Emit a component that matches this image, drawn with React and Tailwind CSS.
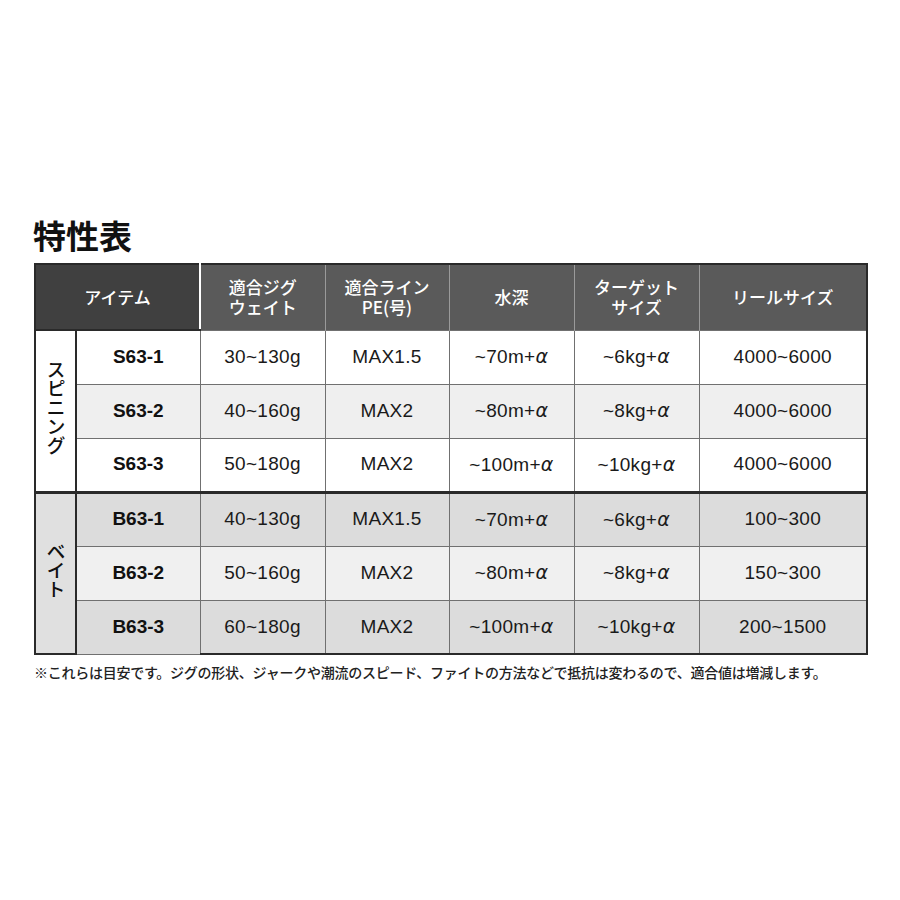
import React from "react";

const jp = { fontFamily: '"Noto Sans CJK JP", "Noto Sans", sans-serif' };
const num = { fontFamily: '"Liberation Sans", "Noto Sans CJK JP", sans-serif' };

const spin = [
  ["S63-1", "30~130g", "MAX1.5", "~70m+α", "~6kg+α", "4000~6000", "bg-white"],
  ["S63-2", "40~160g", "MAX2", "~80m+α", "~8kg+α", "4000~6000", "bg-[#efefef]"],
  ["S63-3", "50~180g", "MAX2", "~100m+α", "~10kg+α", "4000~6000", "bg-white"],
];
const bait = [
  ["B63-1", "40~130g", "MAX1.5", "~70m+α", "~6kg+α", "100~300", "bg-[#dcdcdc]"],
  ["B63-2", "50~160g", "MAX2", "~80m+α", "~8kg+α", "150~300", "bg-[#f0f0f0]"],
  ["B63-3", "60~180g", "MAX2", "~100m+α", "~10kg+α", "200~1500", "bg-[#dcdcdc]"],
];

function Val({ text }) {
  if (!text.endsWith("α")) return text;
  return (
    <>
      {text.slice(0, -1)}
      <span className="italic" style={{ fontFamily: '"DejaVu Sans", sans-serif' }}>α</span>
    </>
  );
}

function Rows({ data, label, labelBg, first }) {
  return data.map((r, i) => (
    <tr key={r[0]} className={`h-[54px] ${r[6]}`}>
      {i === 0 && (
        <td
          rowSpan={3}
          className={`${labelBg} border-2 border-[#2a2a2a] ${first ? "" : "border-t-[3px]"} text-center align-middle`}
        >
          <span
            style={{ ...jp, writingMode: "vertical-rl" }}
            className="text-[19px] font-medium text-[#111] tracking-[0px] leading-[24px] inline-block"
          >
            {label}
          </span>
        </td>
      )}
      <td
        style={num}
        className={`border-[1.5px] border-[#707070] ${i === 0 && !first ? "border-t-[3px] border-t-[#2a2a2a]" : ""} text-center text-[19px] font-bold text-[#111]`}
      >
        {r[0]}
      </td>
      {r.slice(1, 6).map((c, j) => (
        <td
          key={j}
          style={num}
          className={`border-[1.5px] border-[#707070] ${j === 4 ? "border-r-2 border-r-[#2a2a2a]" : ""} ${i === 0 && !first ? "border-t-[3px] border-t-[#2a2a2a]" : ""} ${!first && i === 2 ? "border-b-2 border-b-[#2a2a2a]" : ""} text-center text-[19px] tracking-[0.3px] text-[#1a1a1a]`}
        >
          <Val text={c} />
        </td>
      ))}
    </tr>
  ));
}

function H({ a, b }) {
  return (
    <div className="flex flex-col items-center">
      <span className="block leading-[20px]">{a}</span>
      {b && <span className="block leading-[20px]">{b}</span>}
    </div>
  );
}

export default function App() {
  const hdr = "bg-[#5a5a5a] text-white text-[17px] font-medium text-center border-l-[1.5px] border-l-[#9a9a9a] border-t-2 border-t-[#2a2a2a]";
  return (
    <div className="w-[900px] h-[900px] bg-white pt-[214px] pl-[34px]">
      <h1 style={jp} className="text-[33px] leading-[42px] font-bold text-[#111] mb-[7px] -ml-[1px]">
        特性表
      </h1>
      <table className="w-[832px] table-fixed border-collapse">
        <colgroup>
          <col className="w-[41px]" />
          <col className="w-[124px]" />
          <col className="w-[125px]" />
          <col className="w-[124px]" />
          <col className="w-[125px]" />
          <col className="w-[125px]" />
          <col className="w-[168px]" />
        </colgroup>
        <thead>
          <tr className="h-[66px]" style={jp}>
            <th colSpan={2} className="bg-[#404040] text-white text-[17px] font-medium text-center border-2 border-[#2a2a2a] border-r-2 border-r-white">
              アイテム
            </th>
            <th className={hdr + " border-l-white border-l-2"}><H a="適合ジグ" b="ウェイト" /></th>
            <th className={hdr}><H a="適合ライン" b="PE(号)" /></th>
            <th className={hdr}><H a="水深" /></th>
            <th className={hdr}><H a="ターゲット" b="サイズ" /></th>
            <th className={hdr + " border-r-2 border-r-[#2a2a2a]"}><H a="リールサイズ" /></th>
          </tr>
        </thead>
        <tbody>
          <Rows data={spin} label="スピニング" labelBg="bg-white" first />
          <Rows data={bait} label="ベイト" labelBg="bg-[#e0e0e0]" />
        </tbody>
      </table>
      <p style={jp} className="mt-[7px] text-[14px] font-medium text-[#222] tracking-[-0.25px] whitespace-nowrap">
        ※これらは目安です。ジグの形状、ジャークや潮流のスピード、ファイトの方法などで抵抗は変わるので、適合値は増減します。
      </p>
    </div>
  );
}
